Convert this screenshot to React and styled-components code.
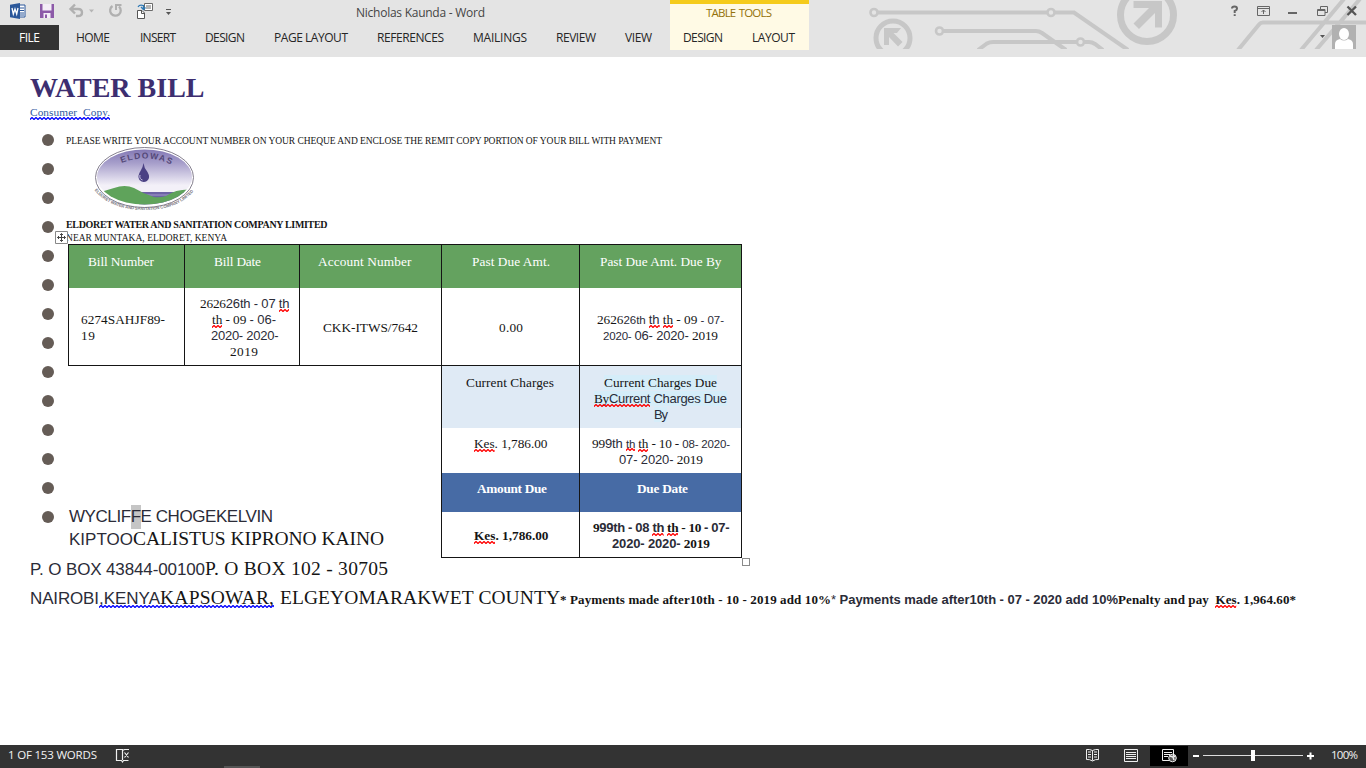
import React, { useLayoutEffect, useRef, useState } from "react";
import styled, { createGlobalStyle, css } from "styled-components";

const GlobalStyle = createGlobalStyle`
  * { box-sizing: border-box; }
  html, body { margin: 0; padding: 0; background: #fff; overflow: hidden; }
`;

const SERIF = '"Liberation Serif", "Times New Roman", serif';
const SANS = '"Liberation Sans", Arial, sans-serif';
const UI = '"Open Sans", "Noto Sans", sans-serif';

/* Text tracked in or out so that it fills a given width. */
const FitBox = styled.span`
  display: inline-block;
  flex: none;
  white-space: pre;
  width: ${(p) => p.$w}px;
  margin-left: ${(p) => p.$ml || 0}px;
`;
const FitInner = styled.span`
  white-space: pre;
`;
function Fit({ w, ml, children }) {
  const ref = useRef(null);
  const [spacing, setSpacing] = useState(0);
  useLayoutEffect(() => {
    const el = ref.current;
    const n = Math.max(1, el.textContent.length - 1);
    setSpacing((w - el.getBoundingClientRect().width) / n);
  }, [w]);
  return (
    <FitBox $w={w} $ml={ml}>
      <FitInner ref={ref} style={{ letterSpacing: spacing }}>{children}</FitInner>
    </FitBox>
  );
}

const Window = styled.div`
  width: 1366px;
  height: 768px;
  display: flex;
  flex-direction: column;
  background: #fff;
`;

/* ---------- ribbon ---------- */
const Header = styled.header`
  position: relative;
  height: 57px;
  flex: none;
  background: #e4e4e4;
  font: 12px/16px ${UI};
  color: #262626;
`;
const Circuit = styled.svg`
  position: absolute;
  left: 860px;
  top: 0;
`;
const TitleRow = styled.div`
  position: relative;
  display: flex;
  height: 25px;
`;
const QuickAccess = styled.svg`
  flex: none;
`;
const Title = styled.div`
  padding: 5px 0 0 6px;
  width: 320px;
  color: #444;
`;
const ToolsHead = styled.div`
  width: 139px;
  border-top: 4px solid #f5cb1b;
  background: #fffae5;
  padding: 1px 0 0 36px;
  color: #94720a;
  font-size: 11.5px;
  word-spacing: 1px;
`;
const WindowButtons = styled.svg`
  margin-left: 411px;
  flex: none;
`;
const TabRow = styled.nav`
  position: relative;
  display: flex;
  height: 25px;
`;
const FileTab = styled.div`
  width: 59px;
  background: #333;
  color: #fff;
  padding: 5px 0 0 19px;
`;
const Tabs = styled.div`
  width: 611px;
  display: flex;
  padding: 5px 0 0 17px;
`;
const ToolTabs = styled.div`
  width: 139px;
  background: #fffae5;
  display: flex;
  padding: 5px 0 0 13px;
`;
const Account = styled.svg`
  margin-left: 501px;
  flex: none;
`;

/* ---------- document ---------- */
const Page = styled.main`
  flex: 1;
  font-family: ${SERIF};
  color: #151515;
`;
const Line = styled.div`
  display: flex;
  align-items: baseline;
  height: ${(p) => p.$h}px;
  line-height: ${(p) => p.$h}px;
  font-size: ${(p) => p.$size}px;
  font-weight: ${(p) => (p.$bold ? 700 : 400)};
  padding-left: ${(p) => p.$x || 0}px;
  margin-top: ${(p) => p.$mt || 0}px;
  ${(p) => p.$color && css`color: ${p.$color};`}
`;
const Sans = styled.span`
  font-family: ${SANS};
  color: #2b2c38;
  line-height: 1;
  font-size: ${(p) => p.$size || 13}px;
`;
const Bold = styled.span`
  font-weight: 700;
  line-height: 1;
  font-size: ${(p) => p.$size}px;
`;
const Selected = styled.span`
  background: #c5c5c5;
  padding: 2px 0 3px;
`;
const Marked = styled.span`
  background: #d5edf9;
`;
const WaveHost = styled.span`
  position: relative;
`;
const WaveSvg = styled.svg`
  position: absolute;
  left: 0;
  bottom: ${(p) => p.$b}px;
  width: 100%;
  height: 3px;
`;
function Wavy({ children, color = "#f00", b = -1 }) {
  const id = `wave-${color.slice(1)}`;
  return (
    <WaveHost>
      {children}
      <WaveSvg $b={b}>
        <defs>
          <pattern id={id} width="4" height="3" patternUnits="userSpaceOnUse">
            <path d="M-1 1.5L0 2.5L2 .5L4 2.5L5 1.5" fill="none" stroke={color} strokeWidth="1.25" />
          </pattern>
        </defs>
        <rect width="100%" height="3" fill={`url(#${id})`} />
      </WaveSvg>
    </WaveHost>
  );
}
const ListArea = styled.section`
  display: flex;
  height: 423px;
  margin-top: 4px;
`;
const Bullets = styled.div`
  width: 65px;
  padding: 10px 0 0 42px;
  display: flex;
  flex-direction: column;
  gap: 17px;
`;
const Bullet = styled.i`
  width: 12px;
  height: 12px;
  flex: none;
  border-radius: 50%;
  background: #655c56;
`;
const Body = styled.div`
  flex: 1;
`;
const Logo = styled.svg`
  display: block;
  margin: -1px 0 0 29px;
`;
const AddressLine = styled.div`
  position: relative;
  height: 12px;
`;
const MoveHandle = styled.svg`
  position: absolute;
  left: -10px;
  top: -1px;
`;
const ResizeHandle = styled.i`
  position: absolute;
  right: -9px;
  bottom: -9px;
  width: 8px;
  height: 8px;
  border: 1px solid #8a8a8a;
  background: #fff;
`;
const BillTable = styled.div`
  width: 674px;
  margin-left: 3px;
`;
const TopGrid = styled.div`
  position: relative;
  display: grid;
  grid-template-columns: 116px 115px 142px 138px 162px;
  grid-template-rows: 43px 77px;
  border: 1px solid #151515;
  border-left: 0;
`;
const LowerRow = styled.div`
  display: flex;
`;
const Addressee = styled.div`
  width: 373px;
  padding: 140px 0 0 1px;
`;
const LowerGrid = styled.div`
  position: relative;
  display: grid;
  grid-template-columns: 138px 162px;
  grid-template-rows: 62px 45px 39px 45px;
  border: 1px solid #151515;
  border-width: 0 1px 1px 0;
`;
const fills = { green: "#64a25f", pale: "#dfeaf5", blue: "#476ba5" };
const Cell = styled.div`
  border-left: 1px solid #151515;
  background: ${(p) => fills[p.$fill] || "#fff"};
  color: ${(p) => (p.$fill === "green" || p.$fill === "blue" ? "#fff" : "inherit")};
  display: flex;
  flex-direction: column;
  justify-content: ${(p) => (p.$mid ? "center" : "flex-start")};
  padding-top: ${(p) => p.$pt}px;
`;
function Row({ x, w, bold, children }) {
  return (
    <Line $h={16} $size={13.3} $x={x} $bold={bold}>
      <Fit w={w}>{children}</Fit>
    </Line>
  );
}

/* ---------- status bar ---------- */
const Status = styled.footer`
  height: 23px;
  flex: none;
  display: flex;
  justify-content: space-between;
  background: #333;
  color: #f3f3f3;
  font: 11.5px/16px ${UI};
  padding: 0 8px;
`;
const StatusSide = styled.div`
  display: flex;
`;
const StatusText = styled.div`
  padding-top: 2px;
`;

function QuickAccessIcons() {
  return (
    <QuickAccess width="350" height="25">
      <path d="M17 5h8v12h-8z" fill="#fff" stroke="#2b579a" />
      <path d="M20 8h4M20 10.5h4M20 13h4M20 15h4" stroke="#2b579a" />
      <path d="M10 4.7L20 3v16l-10-1.700z" fill="#2b579a" />
      <path d="M12 8l1.300 6L15 9l1.700 5L18 8" fill="none" stroke="#fff" strokeWidth="1.300" />
      <path d="M40 4h14v14H40z" fill="#8c5aa8" />
      <path d="M42.500 4h9v6.500h-9zM43.500 13h7v5h-7z" fill="#f4eef7" />
      <path d="M45 14.500h2v3.500h-2z" fill="#8c5aa8" />
      <path d="M75 4.500L70.500 9l4.500 4.500M71 9h7q4 0 4 3.500t-4 3.500h-2" fill="none" stroke="#b0b0b0" strokeWidth="2.400" />
      <path d="M89 9.500h5l-2.500 3z" fill="#b5b5b5" />
      <path d="M112.500 6A5.300 5.300 0 1 0 119 6.500" fill="none" stroke="#b0b0b0" strokeWidth="2.300" />
      <path d="M115 4h6.500v2H117v4h-2z" fill="#b0b0b0" />
      <path d="M144.500 3.500h8v7h-8z" fill="#fff" stroke="#6b6b6b" />
      <path d="M146 6h5M146 8h5" stroke="#6b6b6b" />
      <path d="M137.500 10.500h4.500l2.500 2.500v5.500h-7z" fill="#fff" stroke="#555" />
      <path d="M141.500 10.500v3h3" fill="none" stroke="#555" />
      <path d="M138 7q1.500-2.500 5-1.500M143.500 5v4.500M141 7l2.500 2.500 2-2" fill="none" stroke="#2c78b5" strokeWidth="1.300" />
      <path d="M166 9.500h5" stroke="#555" />
      <path d="M166 12h5l-2.500 3z" fill="#555" />
    </QuickAccess>
  );
}

function CircuitArt() {
  return (
    <Circuit width="506" height="49" fill="none" stroke="#c7c7c7" strokeWidth="4">
      <circle cx="14" cy="12.500" r="3.500" strokeWidth="2.600" />
      <circle cx="191" cy="12.500" r="3.500" strokeWidth="2.600" />
      <circle cx="79.500" cy="31" r="3.500" strokeWidth="2.600" />
      <circle cx="220.500" cy="42" r="3.500" strokeWidth="2.600" />
      <path d="M18 12.500H187M195 12.500H214L268 50M83 31H176Q179 31 182 33L206 50M118 50L127 43.500Q129.500 42 133 42H217M224 42H229Q232 42 235 44L243 50" />
      <circle cx="33" cy="38" r="17" strokeWidth="5" />
      <path d="M24 45V28H41L37 33H33.500L42.500 42L38 46.500L29 37V45z" fill="#c7c7c7" stroke="none" />
      <circle cx="287" cy="15" r="26.500" strokeWidth="7" />
      <path d="M273.500 1H302V27.500H295V13L279 29L273.500 23.500L289 8H273.500z" fill="#c7c7c7" stroke="none" />
      <path d="M378 50L399 24.500Q400.500 22.500 403 22.500H506M441 50L484 -1M456 50L500 -1" />
    </Circuit>
  );
}

function EldowasLogo() {
  return (
    <Logo width="101" height="64" viewBox="0 0 101 64">
      <defs>
        <linearGradient id="sky" x1="0" y1="0" x2="0" y2="1">
          <stop offset="0" stopColor="#8378b4" />
          <stop offset=".25" stopColor="#a79fcb" />
          <stop offset=".65" stopColor="#f3f0f8" />
        </linearGradient>
        <clipPath id="oval"><ellipse cx="50.500" cy="30" rx="47.500" ry="27.500" /></clipPath>
        <path id="topArc" d="M21 19Q50.500 4 80 19" />
        <path id="lowArc" d="M.5 43Q16 63 50.500 63T100.500 43" />
      </defs>
      <ellipse cx="50.500" cy="30.500" rx="49" ry="30" fill="#fff" stroke="#777282" strokeWidth=".9" />
      <ellipse cx="50.500" cy="30" rx="47.500" ry="27.500" fill="url(#sky)" />
      <g clipPath="url(#oval)">
        <path d="M45 45H101V64H45z" fill="#6c62a5" />
        <path d="M50 48H100" stroke="#a39bc9" />
        <path d="M0 47Q10 44 20 41Q31 37 40 41Q50 47 60 50Q66 51 72 49Q84 41 101 43V64H0z" fill="#5fa35b" />
      </g>
      <path d="M49.500 16Q50 21 53.500 25Q57 31 53 34Q49 36.500 45.500 33Q43 29 46.500 24Q49 20 49.500 16z" fill="#4b4184" />
      <path d="M46 28Q45 32 48.500 33" fill="none" stroke="#c6c0df" />
      <text fontFamily="Liberation Sans, sans-serif" fontSize="8.500" fontWeight="700" fill="#544878">
        <textPath href="#topArc" startOffset="7" textLength="51">ELDOWAS</textPath>
      </text>
      <text fontFamily="Liberation Sans, sans-serif" fontSize="4.200" fontWeight="700" fill="#77737c">
        <textPath href="#lowArc" startOffset="0" textLength="110">ELDORET WATER AND SANITATION COMPANY LIMITED</textPath>
      </text>
    </Logo>
  );
}

const tabs = [
  ["HOME", 34, 0], ["INSERT", 36, 30], ["DESIGN", 40, 29], ["PAGE LAYOUT", 74, 29],
  ["REFERENCES", 67, 29], ["MAILINGS", 54, 29], ["REVIEW", 40, 29], ["VIEW", 27, 29],
];

export default function App() {
  return (
    <Window>
      <GlobalStyle />
      <Header>
        <CircuitArt />
        <TitleRow>
          <QuickAccessIcons />
          <Title><Fit w={129}>Nicholas Kaunda - Word</Fit></Title>
          <ToolsHead><Fit w={66}>TABLE TOOLS</Fit></ToolsHead>
          <WindowButtons width="146" height="25" fill="none" stroke="#666">
            <path d="M12 8.500Q12 6.500 14.500 6.500T17 8.700Q17 10 14.700 11V13M14.700 14.200V16" strokeWidth="2" />
            <path d="M37.500 6.500h12v9h-12zM37.500 8.500h12M43.500 14V10M41.500 12l2-2 2 2" />
            <path d="M68 13h9" strokeWidth="2" />
            <path d="M100.500 9V6.500h7v6H105M97.500 9.500h7.500v6h-7.500zM98 10.500h7" />
            <path d="M127.500 6.500l8.500 8.500M136 6.500l-8.500 8.500" stroke="#555" strokeWidth="2.300" />
          </WindowButtons>
        </TitleRow>
        <TabRow>
          <FileTab><Fit w={21}>FILE</Fit></FileTab>
          <Tabs>{tabs.map(([t, w, ml]) => <Fit key={t} w={w} ml={ml}>{t}</Fit>)}</Tabs>
          <ToolTabs><Fit w={40}>DESIGN</Fit><Fit w={43} ml={29}>LAYOUT</Fit></ToolTabs>
          <Account width="56" height="25">
            <path d="M10 10h5l-2.500 3z" fill="#555" />
            <path d="M22 0h24v24H22z" fill="#b1b1b1" />
            <ellipse cx="34" cy="9" rx="5" ry="6" fill="#fff" />
            <path d="M25 24V19Q25 15 30 14Q34 17 38 14Q43 15 43 19V24z" fill="#fff" />
          </Account>
        </TabRow>
      </Header>

      <Page>
        <Line $h={32} $size={28} $bold $x={30} $mt={15} $color="#3d2e70"><Fit w={174.500}>WATER BILL</Fit></Line>
        <Line $h={16} $size={11.3} $x={30} $color="#2f5aa0">
          <Wavy color="#0000ff" b={0}><Fit w={80}>Consumer  Copy.</Fit></Wavy>
        </Line>
        <ListArea>
          <Bullets>{Array.from({ length: 14 }, (_, i) => <Bullet key={i} />)}</Bullets>
          <Body>
            <Line $h={14} $size={9.500} $mt={10} $x={1}>
              <Fit w={596}>PLEASE WRITE YOUR ACCOUNT NUMBER ON YOUR CHEQUE AND ENCLOSE THE REMIT COPY PORTION OF YOUR BILL WITH PAYMENT</Fit>
            </Line>
            <EldowasLogo />
            <Line $h={14} $size={10} $bold $x={1} $mt={7}><Fit w={261.500}>ELDORET WATER AND SANITATION COMPANY LIMITED</Fit></Line>
            <AddressLine>
              <Line $h={13} $size={9.500} $x={1}><Fit w={161}>NEAR MUNTAKA, ELDORET, KENYA</Fit></Line>
              <MoveHandle width="13" height="13">
                <path d="M.5.5h12v12H.5z" fill="#fff" stroke="#888" />
                <path d="M6.500 2.500v8M2.500 6.500h8M5 4l1.500-1.500L8 4M5 9l1.500 1.500L8 9M4 5L2.500 6.500 4 8M9 5l1.500 1.500L9 8" fill="none" stroke="#444" />
              </MoveHandle>
            </AddressLine>
            <BillTable>
              <TopGrid>
                <Cell $fill="green" $pt={9}><Row x={19} w={66}>Bill Number</Row></Cell>
                <Cell $fill="green" $pt={9}><Row x={29} w={47}>Bill Date</Row></Cell>
                <Cell $fill="green" $pt={9}><Row x={18} w={93.500}>Account Number</Row></Cell>
                <Cell $fill="green" $pt={9}><Row x={30} w={78}>Past Due Amt.</Row></Cell>
                <Cell $fill="green" $pt={9}><Row x={20} w={121.500}>Past Due Amt. Due By</Row></Cell>
                <Cell $mid $pt={3}><Row x={12} w={84}>6274SAHJF89-</Row><Row x={12} w={14}>19</Row></Cell>
                <Cell $mid $pt={3}>
                  <Row x={15} w={89.500}>2626<Sans>26th - 07 <Wavy>th</Wavy></Sans></Row>
                  <Row x={27} w={64}><Wavy>th</Wavy> - 09 <Sans>- 06-</Sans></Row>
                  <Row x={26} w={67.500}><Sans>2020- 2020-</Sans></Row>
                  <Row x={45} w={28}>2019</Row>
                </Cell>
                <Cell $mid $pt={3}><Row x={23} w={95}>CKK-ITWS/7642</Row></Cell>
                <Cell $mid $pt={3}><Row x={57} w={24}>0.00</Row></Cell>
                <Cell $mid $pt={3}>
                  <Row x={17} w={127}>2626<Sans $size={11.500}>26th </Sans><Sans><Wavy>th</Wavy></Sans> <Wavy>th</Wavy> - 09 <Sans $size={11.500}>- 07-</Sans></Row>
                  <Row x={23} w={115}><Sans $size={11.500}>2020- </Sans><Sans>06- 2020- </Sans>2019</Row>
                </Cell>
              </TopGrid>
              <LowerRow>
                <Addressee>
                  <Line $h={22} $size={17}><Fit w={204}><Sans $size={17}>WYCLIF<Selected>F</Selected>E CHOGEKELVIN</Sans></Fit></Line>
                  <Line $h={22} $size={19.5}>
                    <Fit w={64}><Sans $size={17}>KIPTOO</Sans></Fit><Fit w={251}>CALISTUS KIPRONO KAINO</Fit>
                  </Line>
                </Addressee>
                <LowerGrid>
                  <Cell $fill="pale" $pt={9}><Row x={24} w={88}>Current Charges</Row></Cell>
                  <Cell $fill="pale" $pt={9}>
                    <Row x={24} w={113}><Marked>Current Charges Due</Marked></Row>
                    <Row x={14} w={133}><Marked><Wavy>By<Sans>Current</Sans></Wavy><Sans> Charges Due</Sans></Marked></Row>
                    <Row x={74} w={14}><Marked><Sans>By</Sans></Marked></Row>
                  </Cell>
                  <Cell $pt={8}><Row x={32} w={73.500}><Wavy>Kes</Wavy>. 1,786.00</Row></Cell>
                  <Cell $pt={8}>
                    <Row x={12} w={138}>99<Sans>9th </Sans><Sans $size={11.500}><Wavy>th</Wavy></Sans> <Wavy>th</Wavy> - 10 - <Sans $size={11.500}>08- 2020-</Sans></Row>
                    <Row x={39} w={84}><Sans>07- 2020- </Sans>2019</Row>
                  </Cell>
                  <Cell $fill="blue" $pt={8}><Row bold x={35} w={70}>Amount Due</Row></Cell>
                  <Cell $fill="blue" $pt={8}><Row bold x={57} w={51}>Due Date</Row></Cell>
                  <Cell $mid $pt={3}><Row bold x={32} w={74.500}><Wavy>Kes</Wavy>. 1,786.00</Row></Cell>
                  <Cell $mid $pt={3}>
                    <Row bold x={13} w={136.500}>9<Sans>99th - 08 <Wavy>th</Wavy></Sans> <Wavy>th</Wavy> - 10 <Sans>- 07-</Sans></Row>
                    <Row bold x={32} w={98}><Sans>2020- 2020- </Sans>2019</Row>
                  </Cell>
                  <ResizeHandle />
                </LowerGrid>
              </LowerRow>
            </BillTable>
          </Body>
        </ListArea>
        <Line $h={28} $size={19.5} $x={30} $mt={8}>
          <Fit w={175}><Sans $size={17}>P. O BOX 43844-00100</Sans></Fit><Fit w={183}>P. O BOX 102 - 30705</Fit>
        </Line>
        <Line $h={29} $size={19.5} $x={30}>
          <Fit w={69}><Sans $size={17}>NAIROBI</Sans></Fit>
          <Wavy color="#0000ff" b={4}>
            <Fit w={61}><Sans $size={17}>,KENYA</Sans></Fit><Fit w={114}>KAPSOWAR,</Fit>
          </Wavy>
          <Fit w={280} ml={6}>ELGEYOMARAKWET COUNTY</Fit>
          <Fit w={271}><Bold $size={13}>* Payments made after10th - 10 - 2019 add 10%</Bold></Fit>
          <Fit w={287}><Sans $size={13}>* <b>Payments made after10th - 07 - 2020 add 10%</b></Sans></Fit>
          <Fit w={178}><Bold $size={13}>Penalty and pay  <Wavy>Kes</Wavy>. 1,964.60*</Bold></Fit>
        </Line>
      </Page>

      <Status>
        <StatusSide>
          <StatusText><Fit w={89}>1 OF 153 WORDS</Fit></StatusText>
          <svg width="170" height="23" fill="none" stroke="#f0f0f0">
            <path d="M25.500 15V4.500h-6v11h5l1 1.500 1-1.500h5M25.500 5.500l2-1h4.500M27.500 7.500l4 5M31.500 7.500l-4 5" strokeWidth="1.200" />
            <path d="M127 22h36" stroke="#555" strokeWidth="2" />
          </svg>
        </StatusSide>
        <StatusSide>
          <svg width="251" height="23" fill="none" stroke="#eee">
            <path d="M12.500 15.500V5.500Q9.500 4 6.500 4.500v10q3-.5 6 1.500 3-2 6-1.500v-10Q15.500 4 12.500 5.500M8 7h3M8 9.500h3M8 12h3M14 7h3M14 9.500h3M14 12h3" />
            <path d="M44.500 4.500h13v12h-13zM46 7.500h10M46 9.500h10M46 11.500h10M46 13.500h10" />
            <path d="M70 1h38v20H70z" fill="#000" stroke="none" />
            <path d="M89 15.500h-6.500v-11h11v5M84 7.500h8M84 9.500h6M84 11.500h4" />
            <circle cx="92.500" cy="13" r="3.800" fill="#555" />
            <path d="M90 11l3 1 1 3M93 10l2 2" strokeWidth="1.500" />
            <path d="M113 11h6M227 11h7M230.500 7.500v7" stroke="#fff" strokeWidth="2" />
            <path d="M123 10.500h100" stroke="#ddd" />
            <path d="M171 5h4v11h-4z" fill="#fff" stroke="none" />
          </svg>
          <StatusText><Fit w={27}>100%</Fit></StatusText>
        </StatusSide>
      </Status>
    </Window>
  );
}
